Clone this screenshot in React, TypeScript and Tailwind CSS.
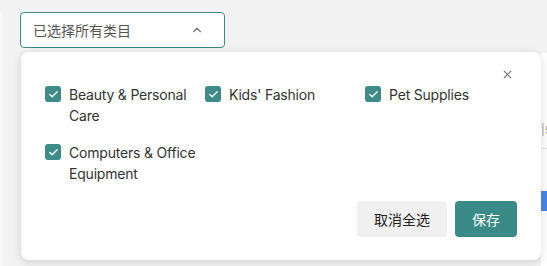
import { Check, ChevronUp, X } from 'lucide-react'

const categories = [
  'Beauty & Personal Care',
  "Kids' Fashion",
  'Pet Supplies',
  'Computers & Office Equipment',
]

const font = { fontFamily: 'Inter, "Noto Sans CJK SC", sans-serif' }

export default function App() {
  return (
    <div className="relative h-[266px] w-[547px] overflow-hidden bg-[#f2f2f2] text-[14px]" style={font}>
      <div className="flex h-full">
        {/* left panel edge */}
        <div className="mt-3 w-[3px] rounded-tr-md bg-[#f8f8f8]" />

        <div className="flex flex-1 flex-col">
          {/* select trigger */}
          <div className="ml-[17px] mt-3 flex h-9 w-[205px] items-center justify-between rounded border border-[#3a8a87] bg-white pl-3 pr-5 text-[#555]">
            <span>已选择所有类目</span>
            <ChevronUp size={14} strokeWidth={2} className="text-[#777]" />
          </div>

          {/* table behind the popup */}
          <div className="ml-auto mt-[5px] flex w-[6px] flex-1 flex-col bg-white">
            <div className="mt-[72px] text-[11px] leading-none text-[#999]">|5</div>
            <div className="mt-[12px] h-px bg-[#e3e3e3]" />
            <div className="mt-[42px] h-5 bg-[#4a86e8]" />
          </div>
        </div>
      </div>

      {/* dropdown popup */}
      <div className="absolute left-[21px] top-[52px] flex h-[208px] w-[520px] flex-col rounded-lg bg-white px-6 pb-[23px] pt-4 shadow-[0_2px_10px_rgba(0,0,0,0.14)]">
        <div className="flex justify-end pr-[3px]">
          <X size={13} strokeWidth={2} className="text-[#777]" />
        </div>

        <div className="mt-[3px] grid grid-cols-[160px_160px_160px] gap-y-4">
          {categories.map((c) => (
            <label key={c} className="flex items-start gap-2 leading-[21px] tracking-[-0.2px] text-[#333]">
              <span className="mt-[2px] flex h-4 w-4 flex-shrink-0 items-center justify-center rounded-[3px] bg-[#3d8c88]">
                <Check size={11} strokeWidth={3} className="text-white" />
              </span>
              <span>{c}</span>
            </label>
          ))}
        </div>

        <div className="mt-auto flex justify-end gap-2">
          <button className="h-9 w-[90px] rounded bg-[#f0f0f0] text-[#222]">取消全选</button>
          <button className="h-9 w-[62px] rounded bg-[#3a8a87] text-white">保存</button>
        </div>
      </div>
    </div>
  )
}
